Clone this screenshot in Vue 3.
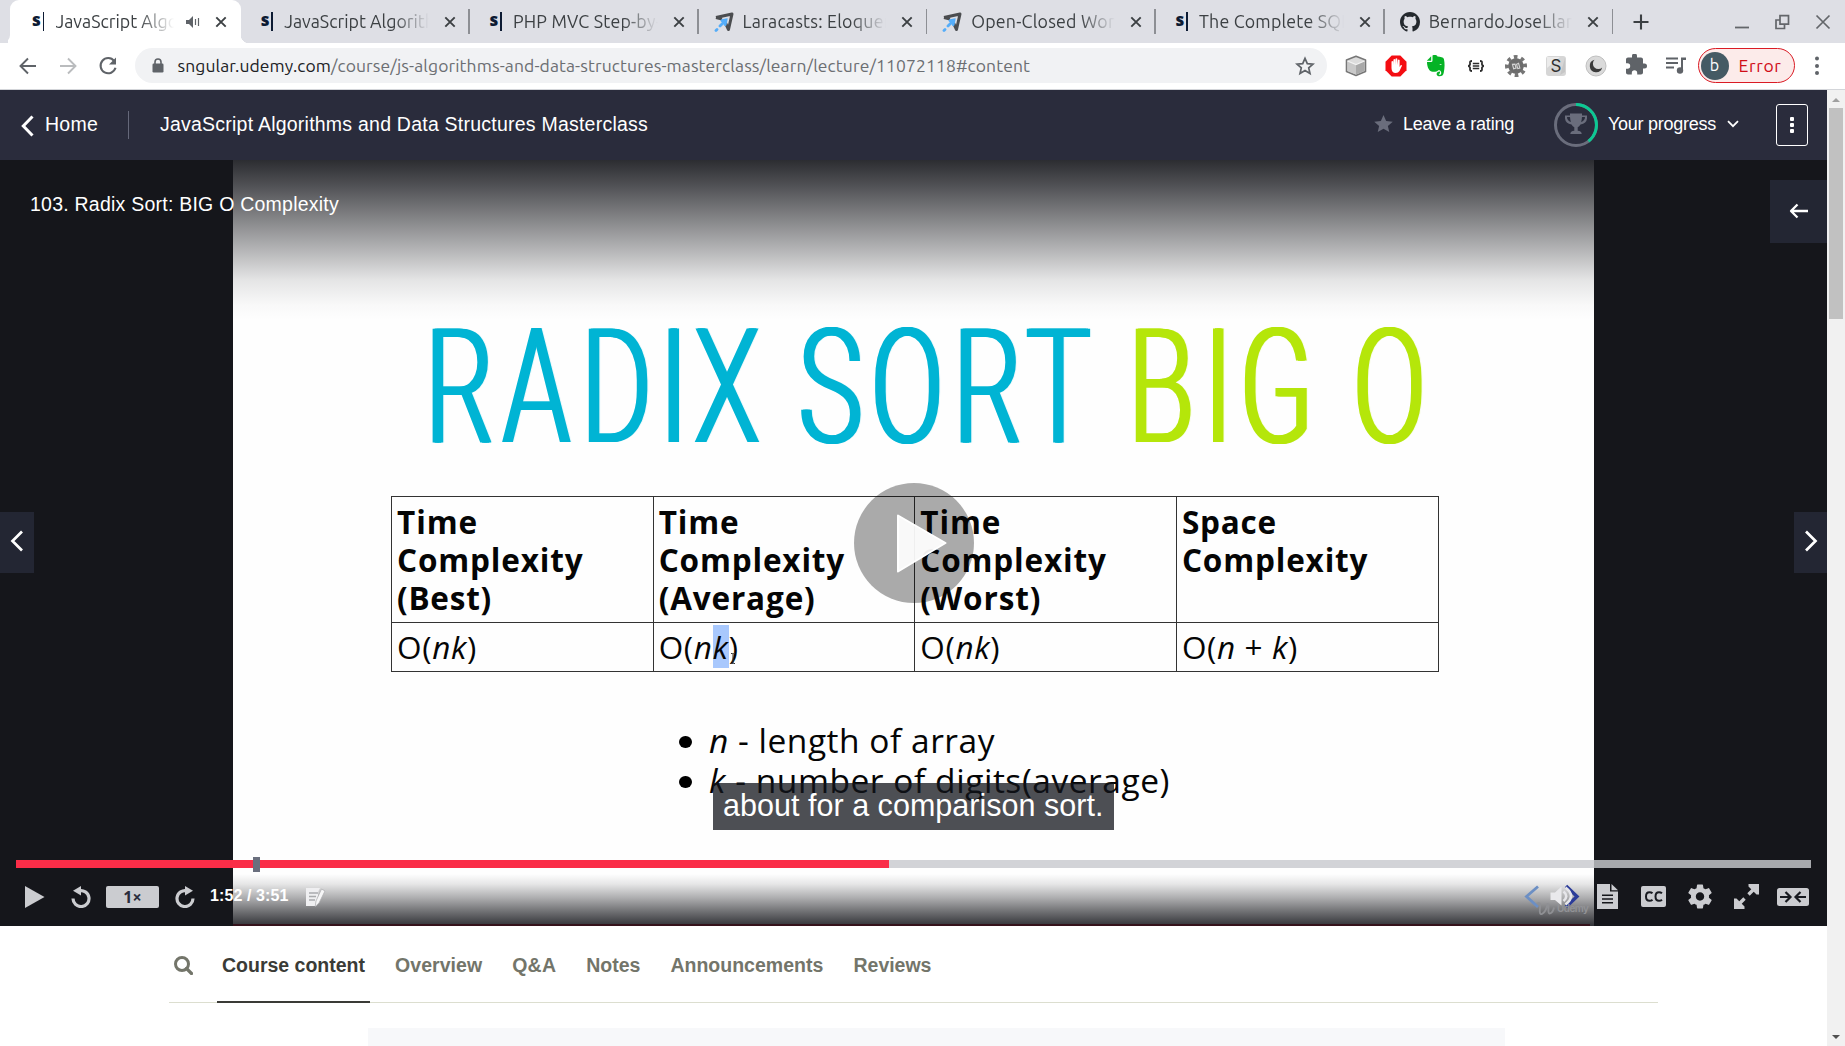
<script setup>
// Adjusts tracking so that a label takes exactly the given width.
const vFit = {
  mounted(el, { value }) {
    const n = [...el.textContent].length
    const w = el.getBoundingClientRect().width
    el.style.letterSpacing = (value - w) / n + 'px'
  },
}

const tabs = [
  { title: 'JavaScript Algorithms', icon: 's', active: true, audio: true },
  { title: 'JavaScript Algorithms', icon: 's' },
  { title: 'PHP MVC Step-by-Step', icon: 's' },
  { title: 'Laracasts: Eloquent', icon: 'l' },
  { title: 'Open-Closed Workshop', icon: 'l' },
  { title: 'The Complete SQL', icon: 's' },
  { title: 'BernardoJoseLlamas', icon: 'g' },
]

const sx = 0.68
const letters = (list) => list.map((v) => ((v - 235) / sx).toFixed(1)).join(' ')
const radix = letters([425, 502.6, 580.9, 659.3, 693.7])
const sort = letters([798.5, 870.5, 953, 1026.1])
const big = letters([1128, 1203.8, 1239.3])
const oh = letters([1352.7])

const heads = [
  ['Time', 'Complexity', '(Best)'],
  ['Time', 'Complexity', '(Average)'],
  ['Time', 'Complexity', '(Worst)'],
  ['Space', 'Complexity'],
]
const headWidths = { Time: 81, Complexity: 186.5, '(Best)': 95, '(Average)': 157, '(Worst)': 121, Space: 95 }

const sections = [
  { t: 'Course content', w: 143, active: true },
  { t: 'Overview', w: 87 },
  { t: 'Q&A', w: 44 },
  { t: 'Notes', w: 54 },
  { t: 'Announcements', w: 153 },
  { t: 'Reviews', w: 78 },
]
</script>

<template>
  <div class="window">
    <div class="tabstrip">
      <div v-for="(t, i) in tabs" :key="i" class="tab" :class="{ active: t.active }">
        <span v-if="t.icon === 's'" class="fav-s"><b>s</b><i></i></span>
        <svg v-else-if="t.icon === 'l'" class="fav" viewBox="0 0 20 20">
          <path d="M2 5.500 18 2 14.500 17.500 11.500 11" fill="none" stroke="#4b4d50" stroke-width="3" stroke-linejoin="round" />
          <path d="M2 5.500 8 7" stroke="#4b4d50" stroke-width="3" />
          <path d="M12 8 6 14M8 8.600 12 8 11.200 12.500M3 17.400 2 18.400" fill="none" stroke="#55adf9" stroke-width="2.800" stroke-linecap="round" />
        </svg>
        <svg v-else class="fav" viewBox="0 0 16 16">
          <path fill="#24292e" d="M8 0C3.58 0 0 3.58 0 8c0 3.54 2.29 6.53 5.47 7.59.4.07.55-.17.55-.38 0-.19-.01-.82-.01-1.49-2.01.37-2.53-.49-2.69-.94-.09-.23-.48-.94-.82-1.13-.28-.15-.68-.52-.01-.53.63-.01 1.08.58 1.23.82.72 1.21 1.87.87 2.33.66.07-.52.28-.87.51-1.07-1.78-.2-3.64-.89-3.64-3.95 0-.87.31-1.59.82-2.15-.08-.2-.36-1.02.08-2.12 0 0 .67-.21 2.2.82.64-.18 1.32-.27 2-.27s1.36.09 2 .27c1.53-1.04 2.2-.82 2.2-.82.44 1.1.16 1.92.08 2.12.51.56.82 1.27.82 2.15 0 3.07-1.87 3.75-3.65 3.95.29.25.54.73.54 1.48 0 1.07-.01 1.93-.01 2.2 0 .21.15.46.55.38A8.01 8.01 0 0 0 16 8c0-4.42-3.58-8-8-8z" />
        </svg>
        <span class="tab-title">{{ t.title }}</span>
        <svg v-if="t.audio" class="audio" viewBox="0 0 14 12">
          <path d="M0 4h3l4-4v12L3 8H0z" fill="#5f6368" /><path d="M9.500 3v6M12.500 2v8" stroke="#5f6368" stroke-width="1.200" />
        </svg>
        <svg class="close" viewBox="0 0 12 12"><path d="M1.300 1.300l9.400 9.400M10.700 1.300 1.300 10.700" stroke="#3c4043" stroke-width="1.900" /></svg>
      </div>
      <svg class="plus" viewBox="0 0 16 16"><path d="M8 .5v15M.5 8h15" stroke="#3c4043" stroke-width="2.100" /></svg>
      <svg class="winctl" viewBox="0 0 96 16" fill="none" stroke="#63666a">
        <path d="M0 13.500h14" stroke-width="1.800" />
        <path d="M45 1.700h8.500v8.500H45zM44.500 6H41v8.500h8.500V10.500" stroke-width="1.700" />
        <path d="M81.500 1.500 94.500 14.500M94.500 1.500 81.500 14.500" stroke-width="1.700" />
      </svg>
    </div>

    <div class="toolbar">
      <div class="nav">
        <svg viewBox="0 0 20 20" fill="none" stroke="#5f6368" stroke-width="1.900"><path d="M18 10H3M10 2.500 2.500 10 10 17.500" /></svg>
        <svg viewBox="0 0 20 20" fill="none" stroke="#babcbe" stroke-width="1.900"><path d="M2 10h15M10 2.500 17.500 10 10 17.500" /></svg>
        <svg viewBox="0 0 20 20" fill="none" stroke="#5f6368" stroke-width="2.100"><path d="M16.200 5A7.600 7.600 0 1 0 17.500 11.800" /><path d="M18 1.500v7h-7z" fill="#5f6368" stroke="none" /></svg>
      </div>
      <div class="url">
        <svg class="lock" viewBox="0 0 12 15"><path d="M3 6V4a3 3 0 0 1 6 0v2" fill="none" stroke="#5f6368" stroke-width="1.600" /><rect y="5.500" x=".5" width="11" height="9" rx="1.200" fill="#5f6368" /></svg>
        <span class="url-text"><span v-fit="153.5" class="host">sngular.udemy.com</span><span v-fit="699">/course/js-algorithms-and-data-structures-masterclass/learn/lecture/11072118#content</span></span>
        <svg class="star" viewBox="0 0 20 20"><path d="M10 2.300 12.300 7.600 18 8.100 13.700 11.900 15 17.500 10 14.500 5 17.500 6.300 11.900 2 8.100 7.700 7.600z" fill="none" stroke="#5f6368" stroke-width="1.700" /></svg>
      </div>
      <div class="ext">
        <svg viewBox="0 0 24 24"><path d="M12 2.300 21.500 6v11.500L12 21.500 2.500 17.500V6z" fill="#dcdcdc" stroke="#777" stroke-width="1.600" stroke-linejoin="round" /><path d="M3.500 7l8.500 3.500v10L3.500 17z" fill="#c9c9c9" /><path d="M12 10.500v10l8.500-3.500V7z" fill="#a9a9a9" /><path d="M3.500 7 12 10.500 20.500 7" fill="none" stroke="#f2f2f2" stroke-width="1.200" /></svg>
        <svg viewBox="0 0 24 24"><path d="M7.700 1.500h8.600l6.200 6.200v8.600l-6.200 6.200H7.700l-6.200-6.200V7.700z" fill="#f40d12" /><path d="M7.500 12V7.500q.9-1 1.700 0V11l.3-5.500q.9-1 1.700 0V11l.3-6.200q.9-1 1.800 0L13.500 11l.4-5q.9-.9 1.700 0v7l1-1.700q1.200-.5 1.400.4L15.500 17q-1.200 2-3.700 2-4.300 0-4.300-5z" fill="#fff" /></svg>
        <svg viewBox="0 0 24 24"><path d="M8.500 1.500c2-.8 4.500-.3 5 1 3 .4 5.800.6 6.400 2.500 1 4 .8 9-.1 13.500-.5 3-2 4-5 3.800-2.500-.3-3-3.800-.5-4.600l1.700-.1v2l-1.300.2.300 1c1.500.3 2.500-.4 2.200-2.200-.4-2-1.700-2.500-3.200-2.200-1 1.500-4.500 1.700-6.500 1.100C4.500 16.500 3 12 3 8h4q1.500 0 1.500-1.500z" fill="#05b325" /><path d="M2.800 6.800 7.200 2.300v4.500z" fill="#05b325" /><path d="M15.300 11q1.500-1.800 2.500 0z" fill="#fff" opacity=".8" /></svg>
        <svg viewBox="0 0 24 24" fill="none" stroke="#2b2b2b" stroke-width="1.800"><path d="M8 7q-2.300 0-2 2 .5 2.600-1.800 3 2.300.4 1.800 3-.3 2 2 2M16 7q2.300 0 2 2-.5 2.600 1.800 3-2.300.4-1.800 3 .3 2-2 2" /><path d="M8.800 9.500h6.400M8.800 12h6.400M8.800 14.500h6.400" stroke-width="1.300" /></svg>
        <svg viewBox="0 0 24 24"><g transform="rotate(-15 12 12)"><circle cx="12" cy="12" r="7.800" fill="#6c6c6c" /><circle cx="12" cy="12" r="9" fill="none" stroke="#757575" stroke-width="4" stroke-dasharray="3.500 3.569" /><path d="M9 9.500v4.500h2.500V10zM13 10.500v4.500h2.200V10z" fill="none" stroke="#d4d4d4" stroke-width="1.100" /></g></svg>
        <svg viewBox="0 0 24 24"><rect x="2" y="2" width="20" height="20" rx="3" fill="#d6d6d6" /><path d="M3 3h13L3 14z" fill="#ebebeb" /><path d="M21 4v14l-5 3z" fill="#c6c6c6" /><text x="12" y="18" text-anchor="middle" font-size="17" font-family="Inter, sans-serif" fill="#303030">S</text></svg>
        <svg viewBox="0 0 24 24"><circle cx="12" cy="12" r="10" fill="#dadada" stroke="#c0c0c0" /><path d="M10.500 5.800a6.300 6.300 0 1 0 7.700 7.700 5.300 5.300 0 0 1-7.700-7.700z" fill="#3b3b3b" /></svg>
        <svg viewBox="0 0 24 24"><path fill="#5f6368" d="M20.500 11H19V7c0-1.100-.9-2-2-2h-4V3.500a2.500 2.500 0 0 0-5 0V5H4c-1.100 0-2 .9-2 2v3.800h1.500a2.700 2.700 0 0 1 0 5.400H2V20c0 1.100.9 2 2 2h3.800v-1.500a2.700 2.700 0 0 1 5.400 0V22H17c1.100 0 2-.9 2-2v-4h1.500a2.500 2.500 0 0 0 0-5z" transform="translate(0 -1.500)" /></svg>
        <svg viewBox="0 0 24 24" fill="#5f6368"><path d="M2 3.500h12v2H2zM2 8h12v2H2zM2 12.500h8v2H2zM17 3.500h5V6h-3v11h-2z" /><circle cx="16" cy="16.500" r="3.200" /></svg>
      </div>
      <div class="profile"><span class="avatar">b</span><span v-fit="43">Error</span></div>
      <svg class="menu" viewBox="0 0 4 20" fill="#5f6368"><circle cx="2" cy="2.500" r="2" /><circle cx="2" cy="10" r="2" /><circle cx="2" cy="17" r="2" /></svg>
    </div>

    <div class="viewport">
      <div class="page">
        <header class="course">
          <svg class="chev" viewBox="0 0 13 22"><path d="M11.500 1.500 2.300 11l9.200 9.500" fill="none" stroke="#fff" stroke-width="3" /></svg>
          <span v-fit="53" class="home">Home</span>
          <i class="divider"></i>
          <span v-fit="488" class="ctitle">JavaScript Algorithms and Data Structures Masterclass</span>
          <svg class="rate" viewBox="0 0 20 19"><path fill="#6a6d7c" d="M10 0l2.800 6.300 7 .7-5.200 4.500L16.100 18 10 14.600 3.900 18l1.500-6.500L.2 7l7-.7z" /></svg>
          <span v-fit="111">Leave a rating</span>
          <svg class="ring" viewBox="0 0 44 44">
            <circle cx="22" cy="22" r="20.500" fill="none" stroke="#6a6d7c" stroke-width="3" />
            <path d="M22 1.500A20.500 20.500 0 0 1 34.500 38.200" fill="none" stroke="#0cc993" stroke-width="3" />
            <path d="M16 10.500h12v2h5v3q-.5 5-6.500 6-1.200 2-2.800 2.800v3.500q4 .3 4 3.200H16.300q0-2.900 4-3.200v-3.500q-1.600-.8-2.800-2.800-6-1-6.500-6v-3h5zm0 3.600h-3q0 3.600 4 5-.9-2.300-1-5zm12 0q-.1 2.700-1 5 4-1.400 4-5z" fill="#6a6d7c" fill-rule="evenodd" />
          </svg>
          <span v-fit="108">Your progress</span>
          <svg class="down" viewBox="0 0 12 8"><path d="M1 1.200l5 5 5-5" fill="none" stroke="#fff" stroke-width="1.800" /></svg>
          <span class="kebab"><i></i><i></i><i></i></span>
        </header>

        <main class="player">
          <div class="slide">
            <svg class="headline" viewBox="0 0 1361 150" width="1361" height="150">
              <text class="cyan" y="132" :transform="`scale(${sx} 1)`" font-size="159.600"><tspan :x="radix">RADIX</tspan> <tspan :x="sort">SORT</tspan></text>
              <text class="lime" y="132" :transform="`scale(${sx} 1)`" font-size="159.600"><tspan :x="big">BIG</tspan> <tspan :x="oh">O</tspan></text>
            </svg>
            <table>
              <tbody>
                <tr>
                  <th v-for="(h, i) in heads" :key="i"><div v-for="w in h" :key="w"><span v-fit="headWidths[w]">{{ w }}</span></div></th>
                </tr>
                <tr>
                  <td><span v-fit="80">O(<em>nk</em>)</span></td>
                  <td><span v-fit="80">O(<em>n<mark>k</mark></em>)</span><svg class="ibeam" viewBox="0 0 6 11"><path d="M1 .5h1.500L3 1l.5-.5H5M3 1v9M1 10.500h1.500L3 10l.5.5H5" fill="none" stroke="#333" /></svg></td>
                  <td><span v-fit="80">O(<em>nk</em>)</span></td>
                  <td><span v-fit="116">O(<em>n</em> + <em>k</em>)</span></td>
                </tr>
              </tbody>
            </table>
            <ul>
              <li><span v-fit="286"><em>n</em> - length of array</span></li>
              <li><span v-fit="461"><em>k</em> - number of digits(average)</span></li>
            </ul>
          </div>

          <div class="shade-top"></div>
          <div class="shade-bottom"></div>
          <i class="redline"></i>
          <div class="lecture"><span v-fit="309">103. Radix Sort: BIG O Complexity</span></div>
          <div class="open-side"><svg viewBox="0 0 20 16"><path d="M19 8H3M8.500 1.500 2 8l6.500 6.500" fill="none" stroke="#fff" stroke-width="2.300" stroke-linejoin="round" /></svg></div>
          <div class="side prev"><svg viewBox="0 0 14 22"><path d="M12 1.500 2.500 11 12 20.500" fill="none" stroke="#fff" stroke-width="2.700" /></svg></div>
          <div class="side next"><svg viewBox="0 0 14 22"><path d="M2 1.500 11.500 11 2 20.500" fill="none" stroke="#fff" stroke-width="2.700" /></svg></div>
          <svg class="bigplay" viewBox="0 0 120 120"><circle cx="60" cy="60" r="60" fill="#000" fill-opacity=".33" /><path d="M44 32.500 91.500 60 44 88.500z" fill="#fff" fill-opacity=".93" stroke="#fff" stroke-width="2" stroke-linejoin="round" /></svg>
          <div class="caption"><span v-fit="380.5">about for a comparison sort.</span></div>

          <div class="controls">
            <div class="progress"><i class="played"></i><i class="mark"></i></div>
            <div class="buttons">
              <svg class="b-play" viewBox="0 0 20 22"><path d="M0 0 19.500 11 0 22z" fill="#cbccd0" /></svg>
              <svg class="b-rw" viewBox="0 0 20 22"><path d="M2 12.500A8 8 0 1 0 8 4.800" fill="none" stroke="#cbccd0" stroke-width="3.200" /><path d="M2 4.800 10 0v9.500z" fill="#cbccd0" /></svg>
              <span class="rate-btn">1×</span>
              <svg class="b-fw" viewBox="0 0 20 22"><path d="M18 12.500A8 8 0 1 1 12 4.800" fill="none" stroke="#cbccd0" stroke-width="3.200" /><path d="M18 4.800 10 0v9.500z" fill="#cbccd0" /></svg>
              <span v-fit="78.5" class="time">1:52 / 3:51</span>
              <svg class="b-note" viewBox="0 0 20 20"><path d="M0 1h14l-1.500 3L11 18l-1 1H0z" fill="#efeff1" /><path d="M3 6h9M3 9.500h7M3 13h6" stroke="#a9aaad" stroke-width="1.500" /><path d="M15.500 2 19 4 13 16l-3.800 3.500L10 14z" fill="#f6f6f7" stroke="#aaabae" stroke-width=".7" /></svg>
              <span class="grow"></span>
              <svg class="b-vol" viewBox="0 0 70 34">
                <path d="M18 4.500 6.500 14.500 18 25" fill="none" stroke="#6c8fc4" stroke-width="2.800" />
                <path d="M46 4 57 14.500 46 25" fill="none" stroke="#2b3c99" stroke-width="3.400" />
                <path d="M30.500 10.500H35L41.500 4.500v19L35 18h-4.500z" fill="#e9e9ec" />
                <path d="M43.500 9.500q5.500 4.500 0 9.500M45.500 5.500q11 8.500 0 17" fill="none" stroke="#e6e6ea" stroke-width="2.600" />
                <path d="M17 22q4-3 3 4-1 7 2 6 4-2 5.500-10 1.500 0 1 4-.5 6 1.500 5.500 3-1 4-6" fill="none" stroke="#8f9094" stroke-width="1.800" />
                <text x="37" y="30" font-size="10" font-weight="600" textLength="32" font-family="Inter, sans-serif" fill="#929397">Udemy</text>
              </svg>
              <svg class="b-doc" viewBox="0 0 21 25"><path fill-rule="evenodd" d="M0 0h13v7.500h8V25H0zM5 10.500v1.600h11v-1.600zm0 3.700v1.600h11v-1.600zm0 3.700v1.600h11v-1.600z" fill="#cbccd0" /><path d="M14.500 0 21 6.200h-6.500z" fill="#cbccd0" /></svg>
              <svg class="b-cc" viewBox="0 0 25 21"><rect width="25" height="21" rx="2" fill="#cbccd0" /><path d="M11.500 7.300q-1.300-1.100-3-1.100-3.500 0-3.500 4.300t3.500 4.300q1.800 0 3-1.100M21 7.300q-1.300-1.100-3-1.100-3.500 0-3.500 4.300t3.500 4.300q1.800 0 3-1.100" fill="none" stroke="#181a20" stroke-width="2" /></svg>
              <svg class="b-gear" viewBox="2 2 20 20"><path fill="#cbccd0" d="M19.430 12.980c.04-.32.07-.64.07-.98s-.03-.66-.07-.98l2.110-1.650c.19-.15.24-.42.12-.64l-2-3.460c-.12-.22-.39-.3-.61-.22l-2.490 1c-.52-.4-1.080-.73-1.690-.98l-.38-2.650C14.460 2.180 14.250 2 14 2h-4c-.25 0-.46.18-.49.42l-.38 2.650c-.61.25-1.170.59-1.690.98l-2.490-1c-.23-.09-.49 0-.61.22l-2 3.460c-.13.22-.07.49.12.64l2.110 1.650c-.04.32-.07.65-.07.98s.03.66.07.98l-2.110 1.650c-.19.15-.24.42-.12.64l2 3.460c.12.22.39.3.61.22l2.490-1c.52.4 1.080.73 1.690.98l.38 2.650c.03.24.24.42.49.42h4c.25 0 .46-.18.49-.42l.38-2.650c.61-.25 1.170-.59 1.690-.98l2.490 1c.23.09.49 0 .61-.22l2-3.460c.12-.22.07-.49-.12-.64l-2.110-1.650zM12 15.500c-1.930 0-3.500-1.570-3.500-3.500s1.570-3.500 3.500-3.500 3.500 1.570 3.500 3.500-1.570 3.500-3.500 3.500z" /></svg>
              <svg class="b-full" viewBox="0 0 25 25"><path d="M14.500 10.500 21.500 3.500M10.500 14.500l-7 7" stroke="#cbccd0" stroke-width="3.400" /><path d="M14.500 0H25v10.500h-2.500L14.500 2.500zM0 14.500V25h10.500v-2.500L2.500 14.500z" fill="#cbccd0" /></svg>
              <svg class="b-fit" viewBox="0 0 32 18"><rect width="32" height="18" rx="2.500" fill="#cbccd0" /><path d="M3 9h10M8.500 4 13.500 9l-5 5M29 9H19M23.500 4l-5 5 5 5" fill="none" stroke="#181a20" stroke-width="2.200" /></svg>
            </div>
          </div>
        </main>

        <nav class="sections">
          <svg class="search" viewBox="0 0 19 19"><circle cx="8" cy="8" r="6.500" fill="none" stroke="#73756a" stroke-width="3" /><path d="M12.500 12.500 17.500 17.500" stroke="#73756a" stroke-width="3.200" stroke-linecap="round" /></svg>
          <span v-for="s in sections" :key="s.t" class="section" :class="{ active: s.active }"><span v-fit="s.w">{{ s.t }}</span></span>
        </nav>
        <div class="panel"></div>
      </div>
      <aside class="scrollbar"><i class="up"></i><i class="thumb"></i><i class="dn"></i></aside>
    </div>
  </div>
</template>

<style>
body { margin: 0; overflow: hidden; }
</style>

<style scoped>
* { box-sizing: border-box; }
svg { display: block; flex: none; }
.window { width: 1845px; height: 1046px; display: flex; flex-direction: column; background: #fff; overflow: hidden; font-family: "Liberation Sans", sans-serif; }

.tabstrip { height: 43px; flex: none; background: #dedfe5; display: flex; align-items: center; padding-left: 12.500px; font-family: Ubuntu, "Noto Sans", sans-serif; }
.tab { position: relative; width: 228.700px; height: 43px; display: flex; align-items: center; padding: 0 11px 0 19.500px; color: #3c4043; font-size: 17.800px; }
.tab:not(.active)::after { content: ""; position: absolute; right: 0; top: 9px; height: 25px; width: 1.500px; background: #8d8f94; }
.tab:nth-child(n + 3) { letter-spacing: .2px; }
.tab.active { background: #fff; border-radius: 9px 9px 0 0; margin-left: -2.500px; width: 231.200px; padding-left: 22px; box-shadow: -2px 9px 0 0 #fff; }
.tab.active::before { content: ""; position: absolute; left: -10px; bottom: 0; width: 10px; height: 43px; background: #dedfe5; border-radius: 0 0 8px 0; }
.tab.active::after { content: ""; position: absolute; right: -8px; bottom: 0; width: 8px; height: 8px; background: radial-gradient(circle at 100% 0, transparent 8px, #fff 8.500px); }
.fav-s { display: flex; align-items: center; width: 23.500px; height: 20px; flex: none; color: #0d1b33; }
.fav-s b { font: 900 17px/16px "Noto Sans", sans-serif; margin-top: -4px; }
.fav-s i { width: 1.500px; height: 19px; background: #0d1b33; margin-left: 2px; }
.fav { width: 20px; height: 20px; margin-left: -4.500px; margin-right: 9px; }
.tab-title { flex: 1; overflow: hidden; white-space: nowrap; -webkit-mask: linear-gradient(90deg, #000 calc(100% - 38px), transparent calc(100% - 3px)); mask: linear-gradient(90deg, #000 calc(100% - 38px), transparent calc(100% - 3px)); line-height: 28px; margin-bottom: 1px; }
.audio { width: 14px; height: 12px; margin: 0 3px 0 9px; }
.close { width: 12px; height: 12px; margin-left: 12px; margin-right: 3px; }
.plus { width: 16px; height: 16px; margin-left: 19.500px; }
.winctl { width: 96px; height: 16px; margin-left: 86px; }

.toolbar { height: 47px; flex: none; display: flex; align-items: center; border-bottom: 1px solid #d3d5d9; padding-bottom: 1px; font-family: Ubuntu, "Noto Sans", sans-serif; background: #fff; position: relative; }
.nav { display: flex; gap: 20px; padding-left: 17.500px; width: 135px; }
.nav svg { width: 20px; height: 20px; }
.url { width: 1192px; height: 35px; border-radius: 18px; background: #f1f2f4; display: flex; align-items: center; padding: 0 12px 0 17px; color: #6b6e72; font-size: 17.500px; white-space: nowrap; }
.lock { width: 12px; height: 15px; }
.url-text { margin-left: 13.500px; flex: 1; display: flex; }
.host { color: #202124; }
.star { width: 20px; height: 20px; }
.ext { display: flex; gap: 16px; margin-left: 16.500px; }
.ext svg { width: 24px; height: 24px; }
.profile { margin-left: 10px; width: 97px; height: 35px; border: 1.500px solid #da1b24; border-radius: 18px; background: #fcebea; color: #d00d17; font-size: 17.500px; display: flex; align-items: center; padding-left: 2px; gap: 10px; }
.avatar { width: 28px; height: 28px; border-radius: 50%; background: #455a64; color: #fff; font-size: 16px; line-height: 27px; text-align: center; }
.menu { width: 4px; height: 20px; margin-left: 20px; }

.viewport { flex: 1; display: flex; min-height: 0; }
.page { width: 1827px; display: flex; flex-direction: column; overflow: hidden; background: #fff; }
.course { height: 70px; flex: none; background: #2a2c3c; color: #fff; display: flex; align-items: center; padding-left: 21px; font-size: 18px; }
.chev { width: 13px; height: 22px; margin-right: 11px; margin-top: 2px; }
.home, .ctitle { font-size: 19.500px; }
.course > span:not(.kebab) { flex: none; white-space: nowrap; padding-bottom: 2px; }
.divider { width: 1px; height: 28px; background: #65687a; margin: 0 31px 0 30px; }
.rate { width: 19px; height: 18px; margin: 0 10px 2px 726px; }
.ring { width: 44px; height: 44px; margin: 0 10.500px 1px 39.500px; }
.down { width: 12px; height: 8px; margin: 0 36.500px 2px 11px; }
.kebab { width: 32px; height: 42px; flex: none; border: 1px solid #fff; border-radius: 3px; display: flex; flex-direction: column; align-items: center; justify-content: center; gap: 2px; }
.kebab i { width: 4px; height: 4px; background: #fff; border-radius: 1px; }

.player { position: relative; height: 766px; flex: none; background: #15161b; }
.slide { width: 1361px; height: 766px; margin-left: 233px; background: #fefefe; font-family: "Open Sans", sans-serif; color: #050505; padding-top: 150px; overflow: hidden; }
.headline { font-family: Roboto, sans-serif; font-weight: 300; }
.cyan { fill: #00b4d4; filter: drop-shadow(3px 0 0 #00b4d4) drop-shadow(3px 0 0 #00b4d4); }
.lime { fill: #b5e60a; filter: drop-shadow(3px 0 0 #b5e60a) drop-shadow(3px 0 0 #b5e60a); }
table { border-collapse: collapse; table-layout: fixed; width: 1047.500px; margin: 36px 0 0 158px; }
th, td { border: 1px solid #333; padding: 0 0 0 5px; text-align: left; vertical-align: top; font-size: 31.500px; }
th { height: 126px; font-weight: 700; line-height: 38.400px; padding-top: 5.500px; }
td { height: 49px; line-height: 48px; position: relative; }
td span, th span, li span { white-space: nowrap; }
mark { background: #a8c8fd; color: inherit; padding: 0; }
.ibeam { position: absolute; left: 76px; top: 30px; width: 6px; height: 11px; }
ul { margin: 48px 0 0 476px; padding: 0; list-style: none; font-size: 33.500px; line-height: 40.300px; }
li { position: relative; }
li::before { content: ""; position: absolute; left: -30px; top: 16px; width: 12.500px; height: 12px; border-radius: 50%; background: #000; }

.shade-top { position: absolute; inset: 0 0 auto 0; height: 160px; background: linear-gradient(#15161be6 0, #15161bbf 25px, #15161b80 62px, #15161b4d 92px, #15161b1c 120px, #15161b06 145px, transparent); }
.shade-bottom { position: absolute; inset: auto 0 0 0; height: 52px; background: linear-gradient(transparent, #15161b1a 10px, #15161b59 24px, #15161b99 37px, #15161be0); }
.redline { position: absolute; left: 233px; bottom: 0; width: 1357px; height: 2px; background: #35121b; }
.lecture { position: absolute; left: 30px; top: 33px; color: #fff; font-size: 19.500px; line-height: 22px; white-space: nowrap; }
.open-side { position: absolute; right: 0; top: 20px; width: 57px; height: 63px; background: #232633; display: flex; align-items: center; justify-content: center; padding-bottom: 1px; }
.open-side svg { width: 20px; height: 16px; }
.side { position: absolute; top: 352px; width: 34px; height: 61px; background: #232633; display: flex; align-items: center; justify-content: center; padding-bottom: 3px; }
.side svg { width: 14px; height: 22px; }
.prev { left: 0; }
.next { right: 0; width: 33px; }
.bigplay { position: absolute; left: 853.500px; top: 323px; width: 120px; height: 120px; }
.caption { position: absolute; left: 713px; top: 623px; width: 401px; height: 47px; padding-left: 10px; background: rgba(18, 20, 27, .75); color: #fff; font-size: 30.500px; line-height: 45px; white-space: nowrap; }
.controls { position: absolute; left: 16px; right: 16px; bottom: 0; height: 66px; }
.progress { position: relative; height: 8px; background: rgba(200, 201, 206, .82); }
.played { display: block; width: 873px; height: 8px; background: #fa2d48; }
.mark { position: absolute; left: 237px; top: -3px; width: 7px; height: 15px; background: #6a6f7e; }
.buttons { display: flex; align-items: center; height: 57px; padding: 0 2px 0 9px; }
.b-play { width: 20px; height: 22px; }
.b-rw { width: 20px; height: 22px; margin-left: 26px; }
.rate-btn { width: 53px; height: 22px; margin: 0 16px 0 15px; background: #cbccd0; color: #2a2c3c; border-radius: 2px; font: 700 16px/22px "Open Sans", sans-serif; text-align: center; }
.b-fw { width: 20px; height: 22px; }
.time { color: #fff; font-size: 16px; font-weight: 700; margin-left: 15px; margin-top: -1px; white-space: nowrap; }
.b-note { width: 20px; height: 20px; margin-left: 17px; }
.grow { flex: 1; }
.b-vol { width: 70px; height: 34px; margin: 4px 7px 0 0; }
.b-doc { width: 21px; height: 25px; margin-right: 23px; }
.b-cc { width: 25px; height: 21px; margin-right: 22px; }
.b-gear { width: 24px; height: 25px; margin-right: 22px; }
.b-full { width: 25px; height: 25px; margin-right: 18px; }
.b-fit { width: 32px; height: 18px; }

.sections { height: 77px; flex: none; margin: 0 169px; border-bottom: 1px solid #dcdecf; display: flex; padding-left: 5px; color: #73756a; font-size: 19.500px; font-weight: 700; }
.search { width: 19px; height: 19px; margin: 30px 24px 0 0; }
.section { height: 77px; line-height: 78px; padding: 0 5px; margin-right: 20.100px; white-space: nowrap; }
.section.active { color: #3a3b36; border-bottom: 2px solid #3a3b36; }
.panel { flex: 1; margin: 25px 322px 0 368px; background: #f7f8fa; }
.scrollbar { width: 18px; background: #f1f1f1; display: flex; flex-direction: column; align-items: center; }
.up { border: 4.500px solid transparent; border-top: 0; border-bottom: 4px solid #a0a0a0; margin: 8px 0 6px; }
.thumb { width: 14px; height: 211px; background: #c1c1c1; }
.dn { border: 4.500px solid transparent; border-bottom: 0; border-top: 4px solid #505050; margin-top: auto; margin-bottom: 7px; }
</style>
